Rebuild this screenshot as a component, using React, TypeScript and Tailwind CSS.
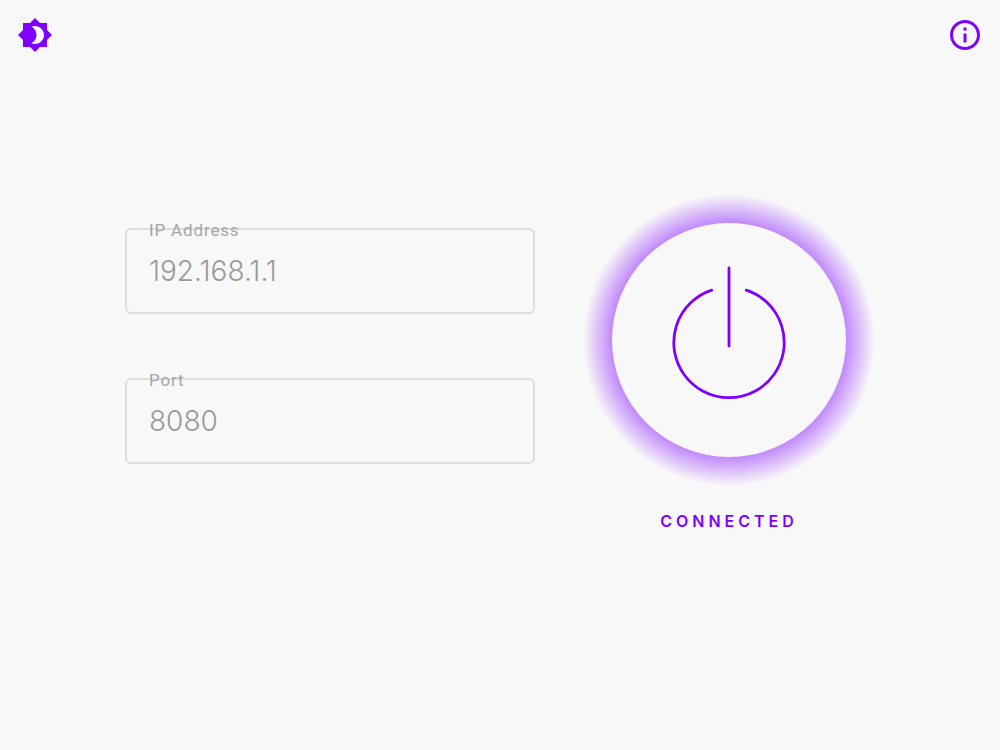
import { useState } from "react";
import { MdBrightness4, MdInfoOutline } from "react-icons/md";

type FieldProps = {
  id: string;
  label: string;
  value: string;
  onChange: (value: string) => void;
};

function Field({ id, label, value, onChange }: FieldProps) {
  return (
    <div className="relative">
      <input
        id={id}
        type="text"
        value={value}
        onChange={(event) => onChange(event.target.value)}
        className="block h-[86px] w-full rounded-md border-2 border-[#dddddd] bg-transparent px-[22px] font-['Inter',sans-serif] text-[28px] font-light text-[#999999] outline-none focus:border-[#7f00ff]"
      />
      <label
        htmlFor={id}
        className="absolute -top-2 left-6 font-['Roboto',sans-serif] text-[17px] leading-5 tracking-wider text-[#a6a6a6]"
      >
        {label}
      </label>
    </div>
  );
}

function PowerIcon() {
  return (
    <svg
      viewBox="0 0 234 234"
      className="size-full"
      fill="none"
      stroke="currentColor"
      strokeWidth="2.8"
      strokeLinecap="round"
      aria-hidden="true"
    >
      <path d="M117 45V123" />
      <path d="M99.700 67.100A55.200 55.200 0 1 0 134.300 67.100" />
    </svg>
  );
}

export default function App() {
  const [address, setAddress] = useState("192.168.1.1");
  const [port, setPort] = useState("8080");

  return (
    <div className="flex min-h-screen flex-col bg-[#f8f8f8] text-[#7f00ff]">
      <header className="flex h-[70px] items-center justify-between px-[17px]">
        <button type="button" aria-label="Toggle theme">
          <MdBrightness4 className="size-9" />
        </button>
        <button type="button" aria-label="About">
          <MdInfoOutline className="size-9" />
        </button>
      </header>
      <main className="flex flex-1 items-center gap-12 px-[12.5%] pb-[70px]">
        <form className="flex min-w-0 flex-1 flex-col gap-16 pb-[58px]">
          <Field id="address" label="IP Address" value={address} onChange={setAddress} />
          <Field id="port" label="Port" value={port} onChange={setPort} />
        </form>
        <section className="flex shrink-0 flex-col items-center pb-[25px]">
          <div className="rounded-full bg-[radial-gradient(closest-side,rgba(127,0,255,0.45)_80%,rgba(127,0,255,0)_100%)] p-[29px]">
            <button
              type="button"
              aria-label="Disconnect"
              className="block size-[234px] rounded-full bg-[#f8f8f8]"
            >
              <PowerIcon />
            </button>
          </div>
          <p className="mt-[25px] font-['Inter',sans-serif] text-base leading-5 font-semibold tracking-[4px]">
            CONNECTED
          </p>
        </section>
      </main>
    </div>
  );
}
